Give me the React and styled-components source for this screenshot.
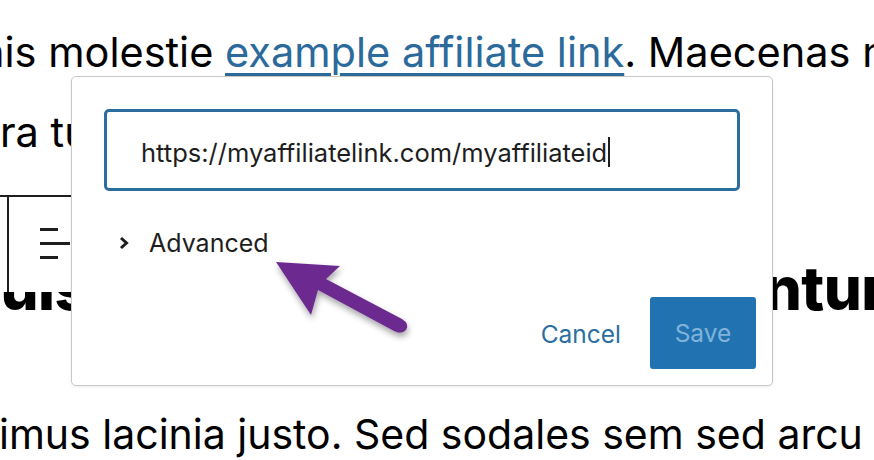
import React from "react";
import styled, { createGlobalStyle } from "styled-components";

const Global = createGlobalStyle`
  html, body { margin: 0; padding: 0; background: #fff; }
  body { font-family: Inter, "Noto Sans", sans-serif; color: #000; }
`;

const Page = styled.div`
  position: relative;
  width: 874px;
  height: 460px;
  overflow: hidden;
  background: #fff;
`;

const Content = styled.div`
  display: flex;
  flex-direction: column;
  padding-top: 12px;
`;

const Line = styled.div`
  font-size: 41.5px;
  line-height: 80px;
  white-space: nowrap;
  margin-left: ${(p) => p.$shift}px;
`;

const Link = styled.span`
  color: #2c6a9c;
  text-decoration: underline;
  text-decoration-thickness: 3px;
  text-underline-offset: 6px;
`;

const Heading = styled.div`
  display: flex;
  justify-content: space-between;
  font-size: 60px;
  font-weight: 800;
  line-height: 70px;
  white-space: nowrap;
  margin-top: 81px;
  margin-left: ${(p) => p.$left}px;
  margin-right: ${(p) => p.$right}px;
  letter-spacing: -0.5px;
`;

const BodyLine = styled(Line)`
  margin-top: 71px;
  font-size: 41px;
`;

const Toolbar = styled.div`
  position: absolute;
  left: -40px;
  top: 195px;
  height: 95px;
  width: 140px;
  display: flex;
  background: #fff;
  border-top: 2px solid #1e1e1e;
`;

const ToolSeg = styled.div`
  width: ${(p) => p.$w}px;
  border-right: ${(p) => (p.$sep ? "2px solid #1e1e1e" : "none")};
  display: flex;
  align-items: flex-start;
  padding: 31px 0 0 31px;
  box-sizing: border-box;
`;

const AlignIcon = styled.div`
  display: flex;
  flex-direction: column;
  gap: 11.5px;
  span {
    display: block;
    height: 2.5px;
    background: #1e1e1e;
  }
`;

const Popover = styled.div`
  position: absolute;
  left: 71px;
  top: 76px;
  width: 702px;
  height: 310px;
  box-sizing: border-box;
  background: #fff;
  border: 1px solid #c8c8c8;
  border-radius: 5px;
  box-shadow: 0 1px 3px rgba(0, 0, 0, 0.08);
  display: flex;
  flex-direction: column;
  padding: 32px 16px 16px 32px;
`;

const UrlField = styled.div`
  width: 636px;
  height: 82px;
  box-sizing: border-box;
  border: 3px solid #2b6d9c;
  border-radius: 5px;
  display: flex;
  align-items: center;
  padding-left: 34px;
  padding-top: 4px;
  font-size: 25.5px;
  color: #1e1e1e;
`;

const Caret = styled.span`
  display: inline-block;
  width: 1.5px;
  height: 30px;
  background: #1e1e1e;
  margin-left: 1px;
`;

const Advanced = styled.div`
  display: flex;
  align-items: center;
  margin-top: 37px;
  margin-left: 14px;
  font-size: 25px;
  color: #1e1e1e;
  gap: 19px;
`;

const Actions = styled.div`
  margin-top: auto;
  display: flex;
  justify-content: flex-end;
  align-items: center;
  gap: 29px;
`;

const CancelBtn = styled.button`
  border: none;
  background: none;
  padding: 0;
  font-family: inherit;
  font-size: 24.5px;
  color: #2a6f9f;
  margin-top: 2px;
`;

const SaveBtn = styled.button`
  border: none;
  width: 106px;
  height: 72px;
  border-radius: 3px;
  background: #2172b1;
  color: #80b2da;
  font-family: inherit;
  font-size: 24.5px;
  padding: 0;
`;

const Arrow = styled.svg`
  position: absolute;
  left: 260px;
  top: 245px;
  overflow: visible;
`;

export default function App() {
  return (
    <Page>
      <Global />
      <Content>
        <Line $shift={-20}>
          nis molestie <Link>example affiliate link</Link>. Maecenas nec
        </Line>
        <Line $shift={0}>ra turpis sed</Line>
        <Heading $left={-46} $right={-12}>
          <span>Quisque</span>
          <span>sequuntur</span>
        </Heading>
        <BodyLine $shift={-1}>imus lacinia justo. Sed sodales sem sed arcu porta</BodyLine>
      </Content>

      <Toolbar>
        <ToolSeg $w={49} $sep />
        <ToolSeg $w={91}>
          <AlignIcon>
            <span style={{ width: 18 }} />
            <span style={{ width: 30 }} />
            <span style={{ width: 18 }} />
          </AlignIcon>
        </ToolSeg>
      </Toolbar>

      <Popover>
        <UrlField>
          https://myaffiliatelink.com/myaffiliateid
          <Caret />
        </UrlField>
        <Advanced>
          <svg width="12" height="16" viewBox="0 0 12 16">
            <path d="M3 3 L8.5 8 L3 13" fill="none" stroke="#1e1e1e" strokeWidth="3" />
          </svg>
          <span>Advanced</span>
        </Advanced>
        <Actions>
          <CancelBtn>Cancel</CancelBtn>
          <SaveBtn>Save</SaveBtn>
        </Actions>
      </Popover>

      <Arrow width="160" height="110" viewBox="0 0 160 110">
        <defs>
          <filter id="sh" x="-30%" y="-30%" width="160%" height="160%">
            <feDropShadow dx="1" dy="4" stdDeviation="3" floodColor="#000" floodOpacity="0.35" />
          </filter>
        </defs>
        <g filter="url(#sh)" fill="#6c2c91">
          <path d="M16 17 L80 21 L66 34 L142 74 Q150 79 146 85 Q141 90 134 86 L58 45 L51 70 Z" />
        </g>
      </Arrow>
    </Page>
  );
}
